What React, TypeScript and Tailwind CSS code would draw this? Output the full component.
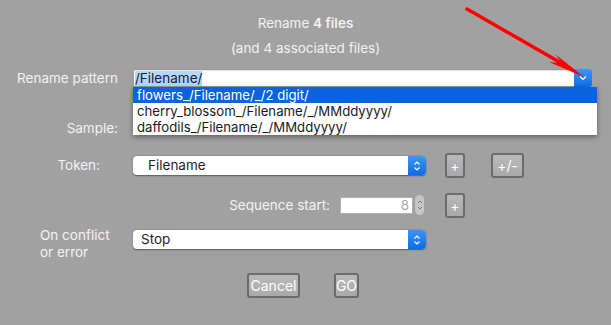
import React from "react";

const Chevrons = () => (
  <svg width="8" height="12" viewBox="0 0 8 12">
    <path d="M1.5 4.5 L4 2 L6.5 4.5" fill="none" stroke="white" strokeWidth="1.2" />
    <path d="M1.5 7.5 L4 10 L6.5 7.5" fill="none" stroke="white" strokeWidth="1.2" />
  </svg>
);

const Select = ({ label, indent }: { label: string; indent: string }) => (
  <div className="flex h-[19px] w-[293px] rounded-[4px] bg-white shadow-[0_0.5px_1.5px_rgba(0,0,0,0.45)] overflow-hidden">
    <div className={`flex-1 text-[13.5px] leading-[19px] text-[#1d1d1d] ${indent}`}>{label}</div>
    <div className="flex w-[18px] items-center justify-center bg-gradient-to-b from-[#3b95f7] to-[#0a6be6]">
      <Chevrons />
    </div>
  </div>
);

const GrayButton = ({ children, w }: { children: React.ReactNode; w: string }) => (
  <div
    className={`flex h-[25px] ${w} items-center justify-center rounded-[3px] border-2 border-[#6b6b6b] bg-gradient-to-b from-[#b9b9bb] to-[#a9a9ab] text-[14px] text-white`}
  >
    {children}
  </div>
);

export default function App() {
  return (
    <div
      className="relative h-[325px] w-[611px] overflow-hidden bg-[#a1a1a1] text-[#f3f3f3]"
      style={{ fontFamily: "Inter, 'Liberation Sans', sans-serif" }}
    >
      <div className="flex flex-col">
        <div className="mt-[15px] text-center text-[13.5px] leading-[16px]">
          Rename <span className="font-semibold">4 files</span>
        </div>
        <div className="mt-[9px] text-center text-[13.5px] leading-[16px]">(and 4 associated files)</div>

        {/* Rename pattern */}
        <div className="mt-[13px] flex h-[18px] items-center">
          <div className="w-[118px] whitespace-nowrap text-right text-[13.5px]">Rename pattern</div>
          <div className="ml-[15px] flex h-[18px] w-[459px]">
            <div className="flex flex-1 items-center border border-[#9a9a9a] border-r-0 bg-white pl-px shadow-[inset_0_1px_1px_rgba(0,0,0,0.12)]">
              <span className="bg-[#b3d7ff] text-[13.5px] leading-[15px] text-[#1a1a1a]">/Filename/</span>
            </div>
            <div className="flex w-[18px] items-center justify-center rounded-r-[3px] bg-gradient-to-b from-[#3d96f7] to-[#0b6ce7]">
              <svg width="8" height="6" viewBox="0 0 8 6">
                <path d="M1 1.5 L4 4.5 L7 1.5" fill="none" stroke="white" strokeWidth="1.2" />
              </svg>
            </div>
          </div>
        </div>

        {/* Sample */}
        <div className="mt-[33px] flex h-[16px] items-center">
          <div className="w-[118px] text-right text-[13.5px]">Sample:</div>
        </div>

        {/* Token */}
        <div className="mt-[17px] flex h-[25px] items-center">
          <div className="w-[100px] text-right text-[13.5px]">Token:</div>
          <div className="ml-[33px]">
            <Select label="Filename" indent="pl-[15px]" />
          </div>
          <div className="ml-[19px]">
            <GrayButton w="w-[20px]">+</GrayButton>
          </div>
          <div className="ml-[26px]">
            <GrayButton w="w-[33px]">+/-</GrayButton>
          </div>
        </div>

        {/* Sequence start */}
        <div className="mt-[14px] flex h-[26px] items-center">
          <div className="w-[330px] text-right text-[13.5px]">Sequence start:</div>
          <div className="ml-[10px] flex h-[17px] w-[73px] items-center justify-end border border-[#b0b0b0] bg-white pr-[3px] text-[13.5px] text-[#a8a8a8]">
            8
          </div>
          <div className="ml-[2px] flex h-[20px] w-[9px] flex-col items-center justify-center rounded-full bg-[#c6c6c6]">
            <svg width="6" height="14" viewBox="0 0 6 14">
              <path d="M1 5 L3 3 L5 5" fill="none" stroke="#7a7a7a" strokeWidth="1" />
              <path d="M1 9 L3 11 L5 9" fill="none" stroke="#7a7a7a" strokeWidth="1" />
            </svg>
          </div>
          <div className="ml-[21px]">
            <GrayButton w="w-[20px]">+</GrayButton>
          </div>
        </div>

        {/* On conflict */}
        <div className="mt-[12px] flex h-[34px] items-start">
          <div className="-mt-[3px] w-[100px] whitespace-nowrap pl-[40px] text-[13.5px] leading-[17px]">
            On conflict
            <br />
            or error
          </div>
          <div className="ml-[33px]">
            <Select label="Stop" indent="pl-[8px]" />
          </div>
        </div>

        {/* Buttons */}
        <div className="mt-[9px] flex h-[25px]">
          <div className="ml-[247px]">
            <GrayButton w="w-[53px]">Cancel</GrayButton>
          </div>
          <div className="ml-[34px]">
            <GrayButton w="w-[25px]">GO</GrayButton>
          </div>
        </div>
      </div>

      {/* Dropdown list */}
      <div className="absolute left-[133px] top-[87px] w-[464px] bg-white text-[13.2px] leading-[16px] text-[#1a1a1a] shadow-[0_2px_5px_rgba(0,0,0,0.4)]">
        <div className="h-[16px] bg-[#0963de] pl-[4px] text-white">flowers_/Filename/_/2 digit/</div>
        <div className="h-[16px] pl-[4px]">cherry_blossom_/Filename/_/MMddyyyy/</div>
        <div className="h-[16px] pl-[4px]">daffodils_/Filename/_/MMddyyyy/</div>
      </div>

      {/* Red arrow */}
      <svg className="absolute left-0 top-0" width="611" height="325" viewBox="0 0 611 325">
        <line x1="467" y1="9" x2="568" y2="67" stroke="#ff0000" strokeWidth="3.5" strokeLinecap="round" />
        <polygon points="584,77 555,54 562,63 549,62" fill="#ff0000" />
      </svg>
    </div>
  );
}
